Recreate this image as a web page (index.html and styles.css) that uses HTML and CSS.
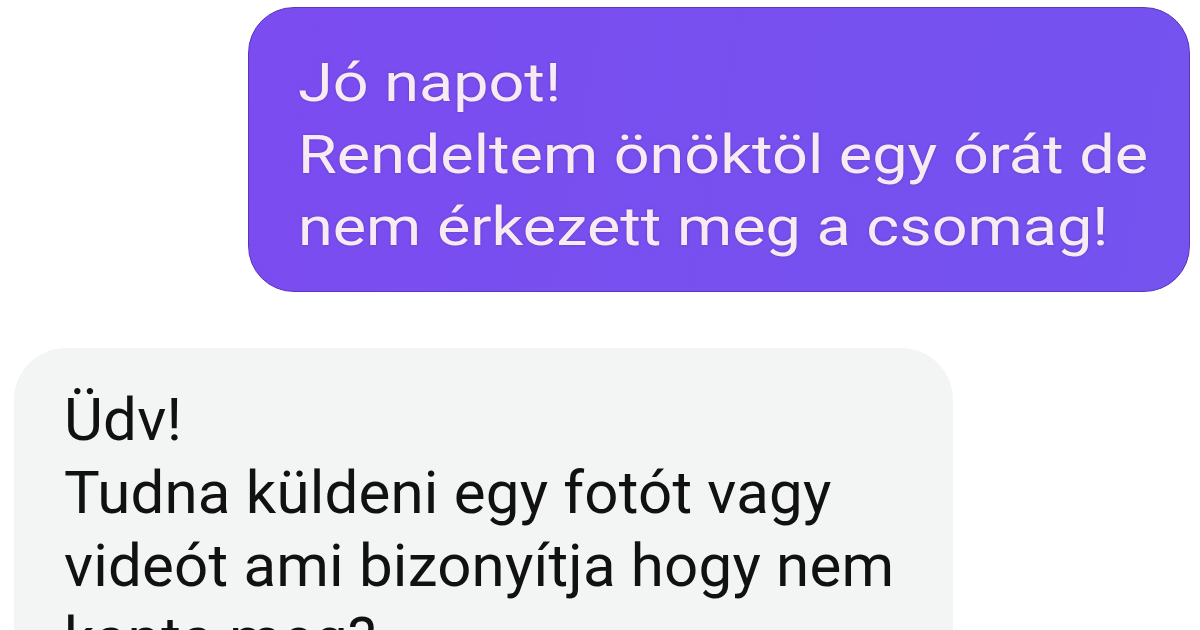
FILE: index.html
```html
<!DOCTYPE html>
<html lang="hu">

<head>
    <meta charset="utf-8">
    <meta name="viewport" content="width=device-width, initial-scale=1.0">
    <title>Üzenetek</title>
    <link rel="stylesheet" href="styles.css">
</head>

<body>
    <main class="chat">
        <div class="uzenet sajat">
            <p>Jó napot!<br>Rendeltem önöktöl egy órát de<br>nem érkezett meg a csomag!</p>
        </div>

        <div class="uzenet valasz">
            <p>Üdv!<br>Tudna küldeni egy fotót vagy<br>videót ami bizonyítja hogy nem<br>kapta meg?</p>
        </div>
    </main>
</body>

</html>
```

FILE: styles.css
```css
* {
    margin: 0;
    box-sizing: border-box;
}

body {
    background-color: #ffffff;
    font-family: Roboto, 'Noto Sans', sans-serif;
    overflow: hidden;
    height: 630px;
}

.chat {
    display: flex;
    flex-direction: column;
    padding-top: 7px;
}

.sajat {
    align-self: flex-end;
    margin-right: 10px;
    width: 942px;
    height: 285px;
    padding: 39px 0 0 49px;
    border-radius: 46px;
    background: linear-gradient(100deg, #7b4cf0, #7453ef);
    border: 1px solid #5b37b8;
    color: #f7ebf3;
    overflow: hidden;
}

/* a kép vízszintesen nyújtott, ezért a szöveget is szélesítjük */
.sajat p {
    width: fit-content;
    font-size: 54px;
    line-height: 72px;
    transform: scaleX(1.165);
    transform-origin: left top;
    text-shadow: 0 0 2px rgba(80, 30, 120, 0.5);
}

.valasz {
    align-self: flex-start;
    margin-left: 14px;
    margin-top: 56px;
    width: 939px;
    padding: 35px 0 40px 50px;
    border-radius: 52px;
    background-color: #f3f4f4;
    color: #111111;
}

.valasz p {
    font-size: 60px;
    line-height: 73px;
    letter-spacing: 0.2px;
}
```
